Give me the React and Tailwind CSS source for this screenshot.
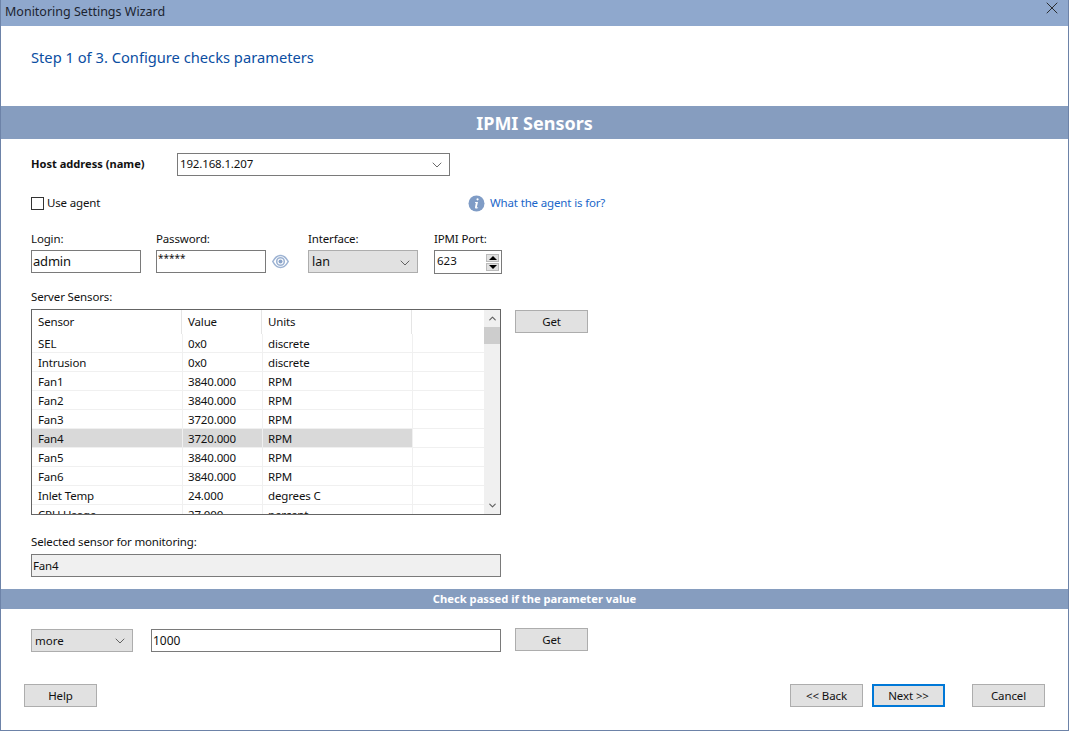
import React from 'react';
import { ChevronDown, ChevronUp, X } from 'lucide-react';

const sensors = [
  ['SEL', '0x0', 'discrete'],
  ['Intrusion', '0x0', 'discrete'],
  ['Fan1', '3840.000', 'RPM'],
  ['Fan2', '3840.000', 'RPM'],
  ['Fan3', '3720.000', 'RPM'],
  ['Fan4', '3720.000', 'RPM'],
  ['Fan5', '3840.000', 'RPM'],
  ['Fan6', '3840.000', 'RPM'],
  ['Inlet Temp', '24.000', 'degrees C'],
  ['CPU Usage', '27.000', 'percent'],
];

const Btn = ({ children, focused, className = '' }) => (
  <button
    className={`w-[73px] h-[23px] flex items-center justify-center bg-[#e1e1e1] text-[11.5px] tracking-[-0.1px] text-[#111] ${
      focused ? 'border-2 border-[#0078d7]' : 'border border-[#adadad]'
    } ${className}`}
  >
    {children}
  </button>
);

const Field = ({ label, children, className = '' }) => (
  <div className={`flex flex-col ${className}`}>
    <span className="h-[20px] text-[11.5px] tracking-[-0.15px] leading-[18px] text-[#111]">{label}</span>
    {children}
  </div>
);

const Select = ({ value, className = '' }) => (
  <div className={`h-[23px] flex items-center justify-between pl-[3px] pr-[4px] bg-[#e1e1e1] border border-[#adadad] text-[#111] ${className}`}>
    <span>{value}</span>
    <ChevronDown size={16} strokeWidth={1.1} className="text-[#333]" />
  </div>
);

export default function App() {
  return (
    <div className="w-[1069px] h-[731px] flex flex-col bg-white border-l border-r border-b border-[#6d83a8] font-['Noto_Sans',sans-serif] overflow-hidden">
      <div className="h-[26px] shrink-0 flex items-center justify-between bg-[#8fa8cd] pl-1 pr-[6px]">
        <span className="-mt-[1px] text-[12.5px] text-[#1c2430]">Monitoring Settings Wizard</span>
        <X size={20} strokeWidth={1.1} className="text-[#222] -mt-[11px]" />
      </div>

      <div className="h-[80px] shrink-0 pl-[30px] pt-[20px] text-[14.7px] leading-[22px] text-[#0b4ea2]">
        Step 1 of 3. Configure checks parameters
      </div>

      <div className="h-[33px] shrink-0 flex items-center justify-center pt-[2px] bg-[#869dbf] text-[18px] font-bold text-white">
        IPMI Sensors
      </div>

      <div className="flex flex-col pl-[30px] pt-[14px]">
        <div className="flex items-center h-[23px]">
          <span className="w-[146px] text-[11.1px] font-bold text-[#111]">Host address (name)</span>
          <div className="w-[273px] h-[23px] flex items-center justify-between pl-[2px] pr-[4px] border border-[#7a7a7a] text-[11.5px] tracking-[-0.15px] text-[#111]">
            <span className="-mt-[2px]">192.168.1.207</span>
            <ChevronDown size={16} strokeWidth={1.1} className="text-[#333]" />
          </div>
        </div>

        <div className="flex items-center h-[18px] mt-[18px]">
          <span className="w-[13px] h-[13px] border border-[#333] bg-white" />
          <span className="ml-[3px] w-[421px] text-[11.5px] tracking-[-0.15px] text-[#111]">Use agent</span>
          <svg width="17" height="17" viewBox="0 0 17 17">
            <circle cx="8.5" cy="8.5" r="8" fill="#7f9cc6" />
            <path d="M9.6 3.2a1.1 1.1 0 1 1-.1 0zM7 7h3l-1.2 5.2c0 .5.5.5 1.2 0l.2.5c-1 1-3.4 1.500-3.200-.4L7.800 8 7 7.700z" fill="#fff" />
          </svg>
          <span className="ml-[5px] text-[11.5px] tracking-[-0.15px] text-[#1a66c9]">What the agent is for?</span>
        </div>

        <div className="flex items-start mt-[18px]">
          <Field label="Login:" className="w-[125px]">
            <div className="w-[110px] h-[23px] flex items-center pl-[1px] border border-[#7a7a7a] text-[13px] tracking-[-0.2px] text-[#111]">admin</div>
          </Field>
          <Field label="Password:" className="w-[116px]">
            <div className="w-[110px] h-[23px] flex items-start pl-[1px] border border-[#7a7a7a] text-[10px] leading-[15px] text-[#111]">*****</div>
          </Field>
          <div className="w-[36px] h-[43px] flex items-end pb-[4px]">
            <svg width="17" height="15" viewBox="0 0 17 15" fill="none">
              <path d="M.8 7.500C3 3.300 5.700 1.500 8.500 1.500s5.500 1.800 7.700 6c-2.200 4.200-4.900 6-7.700 6S3 11.700.8 7.500z" stroke="#9db3d3" strokeWidth="1.600" />
              <circle cx="8.500" cy="7.500" r="3.800" stroke="#9db3d3" strokeWidth="1.600" />
              <circle cx="8.500" cy="7.500" r="2" fill="#8aa3c8" />
            </svg>
          </div>
          <Field label="Interface:" className="w-[126px]">
            <Select value="lan" className="w-[110px] text-[12.5px] pt-[2px]" />
          </Field>
          <Field label="IPMI Port:">
            <div className="w-[68px] h-[24px] flex items-center justify-between pl-[2px] pr-[2px] border border-[#7a7a7a] text-[11.5px] text-[#111]">
              <span className="-mt-[2px]">623</span>
              <div className="flex flex-col gap-[1px]">
                <span className="w-[13px] h-[8px] flex items-center justify-center bg-[#e1e1e1] border border-[#bbb]">
                  <span className="w-0 h-0 border-x-[4px] border-x-transparent border-b-[4px] border-b-black" />
                </span>
                <span className="w-[13px] h-[8px] flex items-center justify-center bg-[#e1e1e1] border border-[#bbb]">
                  <span className="w-0 h-0 border-x-[4px] border-x-transparent border-t-[4px] border-t-black" />
                </span>
              </div>
            </div>
          </Field>
        </div>

        <span className="mt-[15px] h-[20px] text-[11.5px] tracking-[-0.15px] leading-[16px] text-[#111]">Server Sensors:</span>
        <div className="flex items-start">
          <div className="w-[470px] h-[206px] flex border border-[#646464] overflow-hidden">
            <div className="w-[452px] shrink-0 flex flex-col">
              <div className="h-[24px] shrink-0 flex text-[11.5px] tracking-[-0.15px] text-[#111]">
                <span className="w-[150px] h-[24px] pl-[6px] leading-[24px] border-r border-[#e5e5e5]">Sensor</span>
                <span className="w-[80px] h-[24px] pl-[6px] leading-[24px] border-r border-[#e5e5e5]">Value</span>
                <span className="w-[150px] h-[24px] pl-[6px] leading-[24px] border-r border-[#e5e5e5]">Units</span>
              </div>
              {sensors.map(([name, value, units]) => (
                <div key={name} className="h-[19px] shrink-0 flex border-b border-[#f0f0f0] text-[11.5px] tracking-[-0.15px] leading-[19px] text-[#111]">
                  <span className={`w-[151px] pl-[6px] border-r border-[#f0f0f0] ${name === 'Fan4' ? 'bg-[#d9d9d9]' : ''}`}>{name}</span>
                  <span className={`w-[80px] pl-[5px] border-r border-[#f0f0f0] ${name === 'Fan4' ? 'bg-[#d9d9d9]' : ''}`}>{value}</span>
                  <span className={`w-[150px] pl-[5px] border-r border-[#f0f0f0] ${name === 'Fan4' ? 'bg-[#d9d9d9]' : ''}`}>{units}</span>
                </div>
              ))}
            </div>
            <div className="flex-1 flex flex-col bg-[#f0f0f0]">
              <div className="h-[17px] flex items-center justify-center">
                <ChevronUp size={11} strokeWidth={2.5} className="text-[#606060]" />
              </div>
              <div className="h-[17px] bg-[#cdcdcd]" />
              <div className="flex-1" />
              <div className="h-[17px] flex items-center justify-center">
                <ChevronDown size={11} strokeWidth={2.5} className="text-[#606060]" />
              </div>
            </div>
          </div>
          <Btn className="ml-[14px] mt-[1px]">Get</Btn>
        </div>

        <span className="mt-[19px] h-[20px] text-[11.5px] tracking-[-0.15px] leading-[16px] text-[#111]">Selected sensor for monitoring:</span>
        <div className="w-[470px] h-[23px] flex items-center pl-[1px] bg-[#f0f0f0] border border-[#7a7a7a] text-[11.5px] tracking-[-0.15px] text-[#111]">Fan4</div>
      </div>

      <div className="h-[20px] shrink-0 mt-[12px] flex items-center justify-center bg-[#869dbf] text-[11.2px] font-bold text-white">
        Check passed if the parameter value
      </div>

      <div className="flex items-start pl-[30px] mt-[19px]">
        <Select value="more" className="w-[102px] mt-[1px] text-[11.5px]" />
        <div className="ml-[18px] mt-[1px] w-[350px] h-[23px] flex items-center pl-[1px] border border-[#7a7a7a] text-[12px] text-[#111]">1000</div>
        <Btn className="ml-[14px]">Get</Btn>
      </div>

      <div className="flex items-center pl-[23px] mt-[32px]">
        <Btn>Help</Btn>
        <Btn className="ml-[693px]">&lt;&lt; Back</Btn>
        <Btn focused className="ml-[9px]">Next &gt;&gt;</Btn>
        <Btn className="ml-[27px]">Cancel</Btn>
      </div>
    </div>
  );
}
